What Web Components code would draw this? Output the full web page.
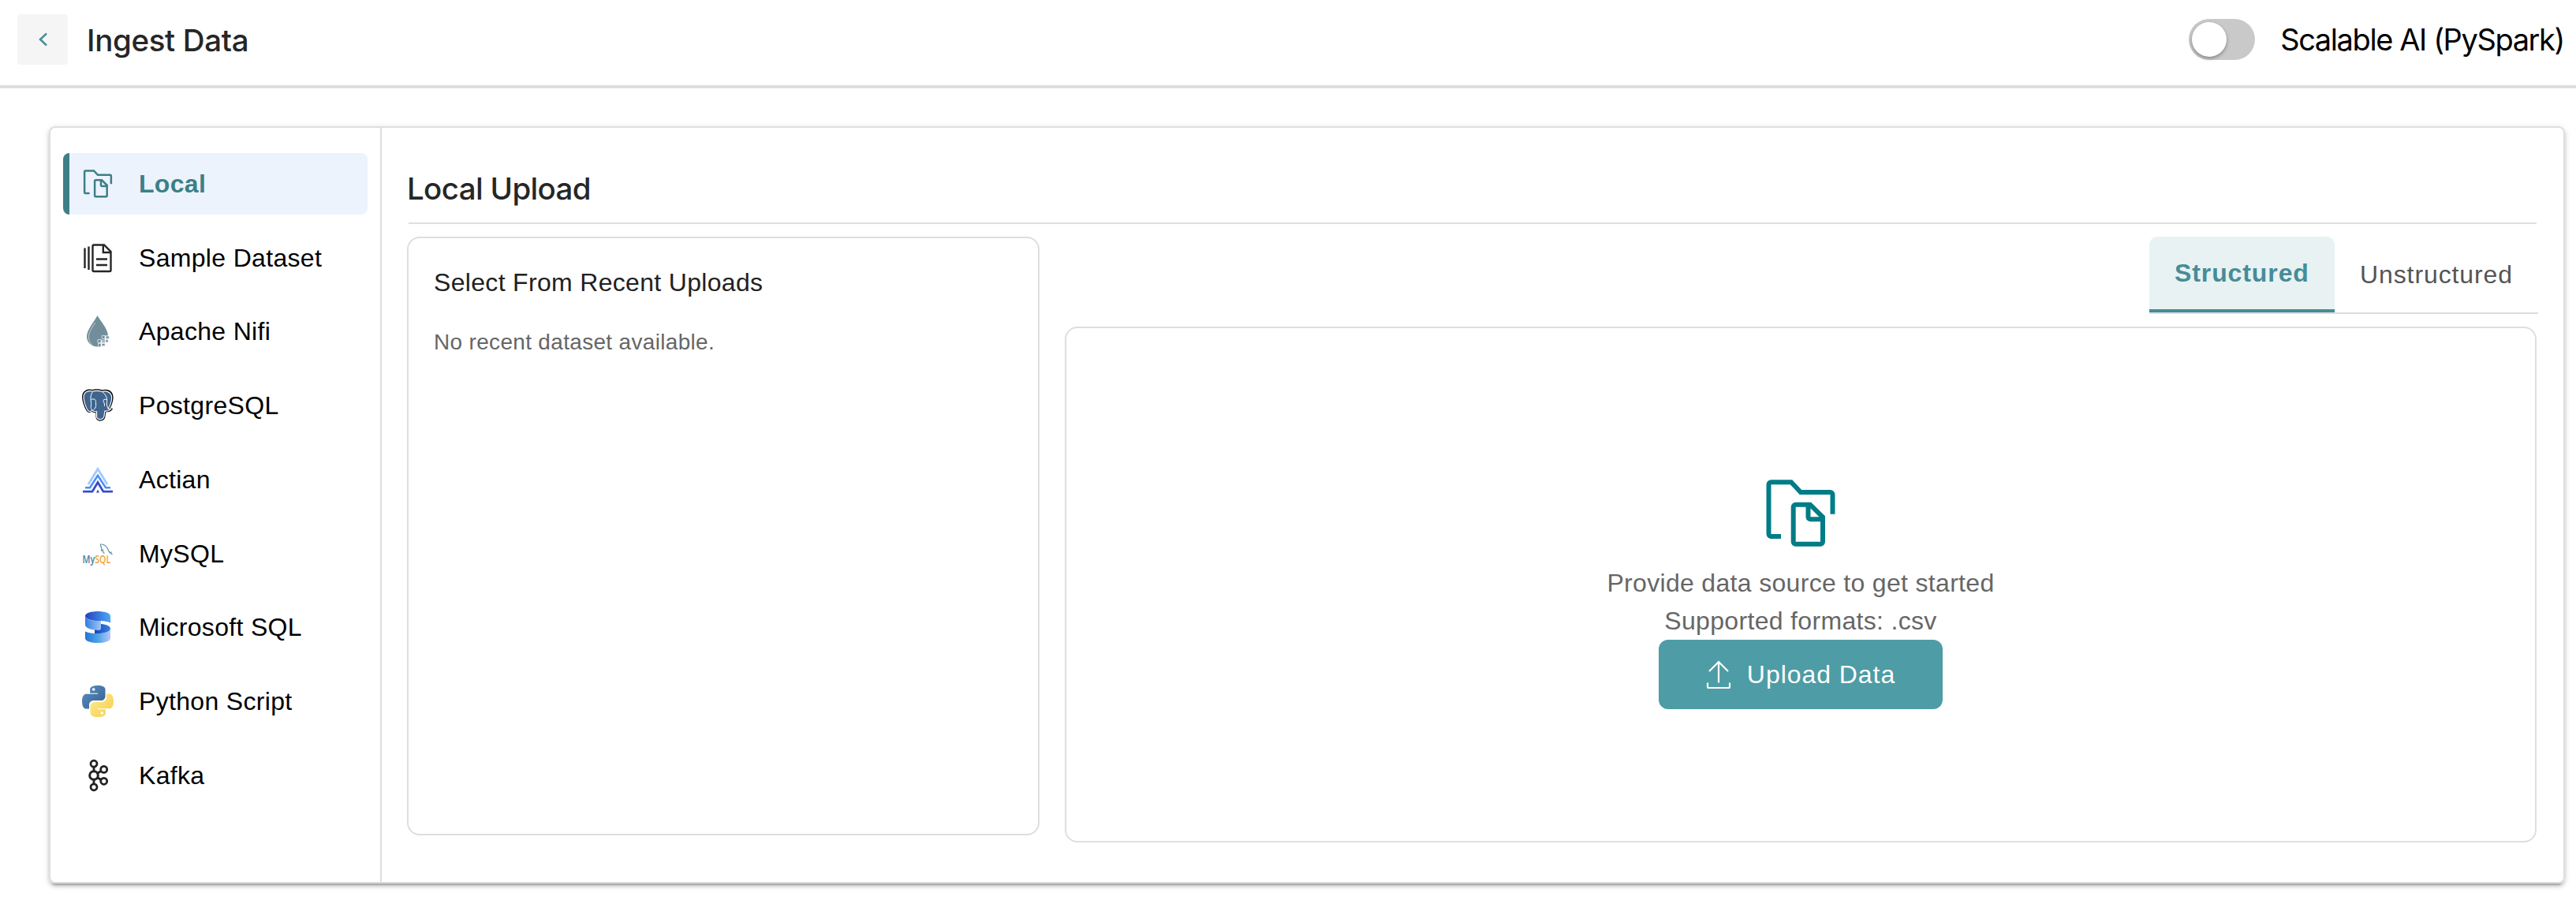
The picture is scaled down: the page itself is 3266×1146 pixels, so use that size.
<!DOCTYPE html>
<html lang="en">
<head>
<meta charset="utf-8">
<title>Ingest Data</title>
<style>
  body {
    margin: 0;
    background: #fff;
    font-family: "Liberation Sans", Arial, sans-serif;
    font-size: 32px;
    letter-spacing: 0.32px;
    color: #000;
  }
</style>
</head>
<body>
<ingest-page></ingest-page>

<script>
const FOLDER = `
  <svg viewBox="0 0 96 96" fill="none" stroke="currentColor" stroke-width="6">
    <path d="M23 77H10.500a3 3 0 0 1-3-3V11.300a3 3 0 0 1 3-3H36L48 21H85.500a3 3 0 0 1 3 3V48.700"/>
    <path d="M41.700 36.700H60L76 52.500V83.700a3 3 0 0 1-3 3H41.700a3 3 0 0 1-3-3V39.700a3 3 0 0 1 3-3zM57.500 37V52.300a3 3 0 0 0 3 3H76"/>
  </svg>`;

const ICONS = {
  local: FOLDER,
  sample: `
    <svg viewBox="0 0 40 40" fill="none" stroke="#262626" stroke-width="2.400">
      <path d="M3.500 7.500V33M8.500 5.500V35"/>
      <path d="M15 3.500H28L36.500 12V35.500a1.500 1.500 0 0 1-1.500 1.500H15a1.500 1.500 0 0 1-1.500-1.500V5a1.500 1.500 0 0 1 1.500-1.500zM26.800 4V13H36M18 21.500H32M18 29H32"/>
    </svg>`,
  nifi: `
    <svg viewBox="0 0 40 40">
      <path d="M19.500 0C22 5 33 17 33 25.500H28.500V31H24V39.500H20C12 39.500 6 34 6 26.500 6 18 16 7 19.500 0z" fill="#728e9b"/>
      <path d="M17 9C12 16 8.500 21 8.500 27.500c0 4 1.500 7 4 9" fill="none" stroke="#c3ced4" stroke-width="1"/>
      <path d="M20 30.500h4v4h-4zM25.200 25.500h3.800v4h-3.800zM25.200 35.500h3.800v3h-3.800zM30 30.500h3v3.500h-3zM30.200 26h4v3.200h-4zM20.500 35.500h3.500v4h-3.500z" fill="#728e9b" stroke="#e4eaed" stroke-width=".8"/>
      <path d="M25.200 30.500h3.800v4h-3.800z" fill="#a9b8c0"/>
    </svg>`,
  postgres: `
    <svg viewBox="0 0 40 40" stroke-linejoin="round" stroke-linecap="round">
      <path d="M13 1C7-.5 1 2 1 9c0 5 3 14 5.500 17.500 2 2.500 4.500 2 6-.5 1 2 3.500 2.500 6 2v7c0 5 9.500 5 10-1l.8-6.500c3 .2 7-.7 8.500-3-1.500 0-3 .3-4-.2C38 19 39.500 10 38 6 36 1 30 0 26 1.500 21 0 17 0 13 1z" fill="#3f658f" stroke="#111" stroke-width="2"/>
      <path d="M13 1C7-.5 1 2 1 9c0 5 3 14 5.500 17.500 2 2.500 4.500 2 6-.5 1 2 3.500 2.500 6 2v7c0 5 9.500 5 10-1l.8-6.500c3 .2 7-.7 8.500-3-1.500 0-3 .3-4-.2C38 19 39.500 10 38 6 36 1 30 0 26 1.500 21 0 17 0 13 1z" transform="translate(1.100 1.100) scale(.945)" fill="#3f658f" stroke="#fff" stroke-width="1.200"/>
      <path d="M13.500 2.500C10.500 6 10.800 12 11.500 16c.5 4-1.500 7 1 9.500M26 3c5 4 6 8 5.500 12.500C31 19 31.500 22 34 25M12 12.500c3-1.500 5.500-.5 5.500 3s1 7-2.500 9.500M31 12.500c-2.500-.8-4.500 0-4 2 .5 1.500 2 3 1.500 6" fill="none" stroke="#fff" stroke-width="1"/>
    </svg>`,
  actian: `
    <svg viewBox="0 0 40 40" fill="none">
      <path d="M8 26L20 6.500 32 26" stroke="#a3cdff" stroke-width="3"/>
      <path d="M4 30.200H10L20 14.800 30 30.200H36" stroke="#4a8df5" stroke-width="2.500"/>
      <path d="M1 35.200H13L20 23.500 27 35.200H39" stroke="#364dc6" stroke-width="2.800"/>
      <path d="M20 32.500L22 36.500H18z" fill="#364dc6"/>
    </svg>`,
  mysql: `
    <svg viewBox="0 0 40 40">
      <text x="0" y="0" transform="translate(.5 31.500) scale(.77 1)" font-family="Open Sans, sans-serif" font-weight="600" font-size="14" letter-spacing="0" fill="#3f7f9b">My<tspan fill="#f0a33c">SQL</tspan></text>
      <path d="M25 17c-1-3 0-4-.8-6C23 9 23 7.500 25 8c4 .5 7 3.500 8.500 8 .5 2 2 2.500 5 5M26 14l1 4.500M27 18.500l1.500 1M34.500 18.500l3.500-.5" fill="none" stroke="#5d93a8" stroke-width="1.200"/>
    </svg>`,
  mssql: `
    <svg viewBox="0 0 40 40">
      <defs>
        <linearGradient id="a"><stop stop-color="#2440c0"/><stop offset="1" stop-color="#4aa8f5"/></linearGradient>
        <linearGradient id="b"><stop stop-color="#2f7fdd"/><stop offset="1" stop-color="#a3c4f8"/></linearGradient>
        <linearGradient id="c"><stop stop-color="#1f3fba"/><stop offset="1" stop-color="#2f86e2"/></linearGradient>
        <linearGradient id="d"><stop stop-color="#2573d6"/><stop offset=".5" stop-color="#4ba3e6"/><stop offset="1" stop-color="#bdc5fa"/></linearGradient>
      </defs>
      <path d="M4 6C4 2 12 0 20 0s16 2 16 6v8.500C32 12.500 26 12 20 12S4 10 4 6z" fill="url(#a)"/>
      <path d="M16 22h7l1-6c7 .5 12 2.500 12 6 0 4-8 6-16 6h-4z" fill="url(#c)"/>
      <path d="M4 6c0 4 8 6 16 6h4v9c0 2-1 3-3 3-9 0-17-3-17-7z" fill="url(#b)"/>
      <path d="M4 25.500C8 27.500 14 28 20 28s16-2 16-6v12c0 4-8 6-16 6S4 38 4 34z" fill="url(#d)"/>
    </svg>`,
  python: `
    <svg viewBox="0 0 24 24">
      <defs>
        <linearGradient id="e" x1="0" y1="0" x2="1" y2="1"><stop stop-color="#5b90c4"/><stop offset="1" stop-color="#365f8c"/></linearGradient>
        <linearGradient id="f" x1="1" y1="1" x2="0" y2="0"><stop stop-color="#ffec94"/><stop offset="1" stop-color="#f5cd49"/></linearGradient>
      </defs>
      <path fill="url(#e)" d="M12 0C8.500 0 6.100.9 6.100 3v2.800H12v.6H3.200C1 6.400 0 9 0 12s1 5.700 3 5.700h2.400v-2.900c0-2 1.600-3.400 3.500-3.400h5.600c1.800 0 3.200-1.400 3.200-3.200V3c0-2-2.300-3-5.700-3z"/>
      <path fill="url(#f)" transform="rotate(180 12 12)" d="M12 0C8.500 0 6.100.9 6.100 3v2.800H12v.6H3.200C1 6.400 0 9 0 12s1 5.700 3 5.700h2.400v-2.900c0-2 1.600-3.400 3.500-3.400h5.600c1.800 0 3.200-1.400 3.200-3.200V3c0-2-2.300-3-5.700-3z"/>
      <circle cx="8.800" cy="3" r="1.100" fill="#fff"/>
      <circle cx="15.200" cy="21" r="1.100" fill="#fff"/>
    </svg>`,
  kafka: `
    <svg viewBox="0 0 40 40" fill="none" stroke="#222" stroke-width="2.800">
      <path d="M15 9v5M15 26v5M20 17l4-2.500M20 23l4 2.500"/>
      <circle cx="15" cy="20" r="5.300" stroke-width="3"/>
      <circle cx="15" cy="5.200" r="4"/>
      <circle cx="15" cy="34.800" r="4"/>
      <circle cx="27.700" cy="12.400" r="4"/>
      <circle cx="27.700" cy="27.300" r="4"/>
    </svg>`,
};

// Helper so every element opens its shadow root the same way
class BaseElement extends HTMLElement {
  constructor() {
    super();
    this.attachShadow({ mode: 'open' });
  }

  connectedCallback() {
    this.shadowRoot.innerHTML = this.render();
  }
}

class ToggleSwitch extends BaseElement {
  render() {
    return `
      <style>
        :host {
          display: flex;
          align-items: center;
          gap: 32px;
          font: 400 38px/48px Inter, sans-serif;
          letter-spacing: -1.400px;
        }
        .track {
          box-sizing: border-box;
          width: 84px;
          height: 52px;
          padding: 4px;
          border-radius: 26px;
          background: #c9c9c9;
        }
        .knob {
          width: 44px;
          height: 44px;
          border-radius: 50%;
          background: #fff;
          box-shadow: 0 2px 4px rgba(0, 0, 0, 0.35);
        }
      </style>
      <div class="track"><div class="knob"></div></div>
      <div><slot></slot></div>
    `;
  }
}
customElements.define('toggle-switch', ToggleSwitch);

class PageHeader extends BaseElement {
  render() {
    return `
      <style>
        :host {
          box-sizing: border-box;
          display: flex;
          align-items: center;
          height: 112px;
          padding: 0 15px 8px 22px;
          border-bottom: 4px solid #dedede;
        }
        button {
          display: flex;
          align-items: center;
          justify-content: center;
          width: 64px;
          height: 64px;
          padding: 0;
          border: 0;
          border-radius: 4px;
          background: #f5f5f5;
        }
        h1 {
          flex: 1;
          margin: 0 0 0 24px;
          padding-top: 1px;
          font: 500 38.500px/48px Inter, sans-serif;
          letter-spacing: -0.350px;
          color: #262626;
        }
      </style>
      <button aria-label="Back">
        <svg width="20" height="20" viewBox="0 0 20 20" fill="none" stroke="#4a8d97" stroke-width="2.500"><path d="M15 2.500L7 10l8 7.500"/></svg>
      </button>
      <h1><slot></slot></h1>
      <slot name="action"></slot>
    `;
  }
}
customElements.define('page-header', PageHeader);

class SourceItem extends BaseElement {
  render() {
    return `
      <style>
        :host {
          box-sizing: border-box;
          display: flex;
          align-items: center;
          gap: 32px;
          height: 77.750px;
          padding-left: 16px;
          border-left: 8px solid transparent;
          border-radius: 8px;
        }
        :host([active]) {
          border-left-color: #3d7f87;
          background: #ecf3fc;
          color: #3d7f87;
          font-weight: 700;
        }
        svg {
          display: block;
          width: 40px;
          height: 40px;
          overflow: visible;
        }
        span {
          padding-top: 1px;
        }
      </style>
      ${ICONS[this.getAttribute('icon')]}
      <span><slot></slot></span>
    `;
  }
}
customElements.define('source-item', SourceItem);

class SourceList extends BaseElement {
  render() {
    return `
      <style>
        :host {
          box-sizing: border-box;
          display: flex;
          flex-direction: column;
          gap: 16px;
          width: 420px;
          padding: 32px 16px;
          border-right: 2px solid #dedede;
        }
      </style>
      <slot></slot>
    `;
  }
}
customElements.define('source-list', SourceList);

class RecentUploads extends BaseElement {
  render() {
    return `
      <style>
        :host {
          box-sizing: border-box;
          display: block;
          width: 802px;
          height: 759px;
          padding: 32px;
          border: 2px solid #dedede;
          border-radius: 16px;
        }
        h3 {
          margin: 0;
          font-size: 32px;
          font-weight: 400;
          line-height: 48px;
          color: #212121;
        }
        p {
          margin: 32px 0 0;
          font-size: 28px;
          line-height: 40px;
          color: #666;
        }
      </style>
      <h3>Select From Recent Uploads</h3>
      <p>No recent dataset available.</p>
    `;
  }
}
customElements.define('recent-uploads', RecentUploads);

class UploadTabs extends BaseElement {
  render() {
    return `
      <style>
        :host {
          display: flex;
          align-self: flex-end;
          border-bottom: 2px solid #dedede;
          letter-spacing: 0.900px;
          line-height: 36px;
        }
        .tab {
          box-sizing: border-box;
          height: 96px;
          padding: 30px 32px 0;
          color: #555;
        }
        .tab.active {
          width: 235px;
          padding-top: 28px;
          border-bottom: 4px solid #478c97;
          border-radius: 10px 10px 0 0;
          background: #e8f2f3;
          color: #478c97;
          font-weight: 700;
        }
      </style>
      <div class="tab active">Structured</div>
      <div class="tab">Unstructured</div>
    `;
  }
}
customElements.define('upload-tabs', UploadTabs);

class UploadZone extends BaseElement {
  render() {
    return `
      <style>
        :host {
          box-sizing: border-box;
          display: flex;
          flex-direction: column;
          align-items: center;
          height: 654px;
          margin: 16px 2px 0 0;
          padding-top: 187px;
          border: 2px solid #dedede;
          border-radius: 16px;
          color: #666;
          line-height: 48px;
        }
        .folder {
          height: 96px;
          margin-bottom: 16px;
          color: #007c87;
        }
        .folder svg {
          width: 96px;
          height: 96px;
        }
        button {
          box-sizing: border-box;
          display: flex;
          align-items: center;
          justify-content: center;
          gap: 20px;
          width: 360px;
          height: 88px;
          padding: 0;
          border: 0;
          border-radius: 12px;
          background: #4e9ca5;
          color: #fff;
          font: inherit;
          letter-spacing: 0.950px;
        }
      </style>
      <div class="folder">${FOLDER}</div>
      <div>Provide data source to get started</div>
      <div>Supported formats: .csv</div>
      <button>
        <svg width="32" height="38" viewBox="0 0 32 38" fill="none" stroke="#fff" stroke-width="2.200"><path d="M16 29.500V3M4 15L16 3l12 12M2 29.500v5q0 1.500 1.500 1.500h25q1.500 0 1.500-1.500v-5"/></svg>
        <span>Upload Data</span>
      </button>
    `;
  }
}
customElements.define('upload-zone', UploadZone);

class IngestPage extends BaseElement {
  render() {
    return `
      <style>
        :host {
          display: block;
          padding-bottom: 26px;
        }
        .card {
          box-sizing: border-box;
          display: flex;
          height: 960px;
          margin: 48px 14px 0 62px;
          border: 2px solid #dedede;
          border-radius: 8px;
          box-shadow: 0 6px 2px -4px rgba(0, 0, 0, 0.2), 0 4px 4px rgba(0, 0, 0, 0.14), 0 2px 10px rgba(0, 0, 0, 0.12);
        }
        main {
          flex: 1;
          padding: 53px 32px 0;
        }
        h2 {
          margin: 0 2px 16px;
          padding-bottom: 19px;
          border-bottom: 2px solid #dedede;
          font: 500 38.500px/48px Inter, sans-serif;
          letter-spacing: -0.650px;
          text-indent: -2px;
          color: #262626;
        }
        .row {
          display: flex;
          align-items: flex-start;
          gap: 32px;
        }
        .upload {
          flex: 1;
          display: flex;
          flex-direction: column;
        }
      </style>
      <page-header>
        Ingest Data
        <toggle-switch slot="action">Scalable AI (PySpark)</toggle-switch>
      </page-header>
      <div class="card">
        <source-list>
          <source-item icon="local" active>Local</source-item>
          <source-item icon="sample">Sample Dataset</source-item>
          <source-item icon="nifi">Apache Nifi</source-item>
          <source-item icon="postgres">PostgreSQL</source-item>
          <source-item icon="actian">Actian</source-item>
          <source-item icon="mysql">MySQL</source-item>
          <source-item icon="mssql">Microsoft SQL</source-item>
          <source-item icon="python">Python Script</source-item>
          <source-item icon="kafka">Kafka</source-item>
        </source-list>
        <main>
          <h2>Local Upload</h2>
          <div class="row">
            <recent-uploads></recent-uploads>
            <div class="upload">
              <upload-tabs></upload-tabs>
              <upload-zone></upload-zone>
            </div>
          </div>
        </main>
      </div>
    `;
  }
}
customElements.define('ingest-page', IngestPage);
</script>
</body>
</html>
